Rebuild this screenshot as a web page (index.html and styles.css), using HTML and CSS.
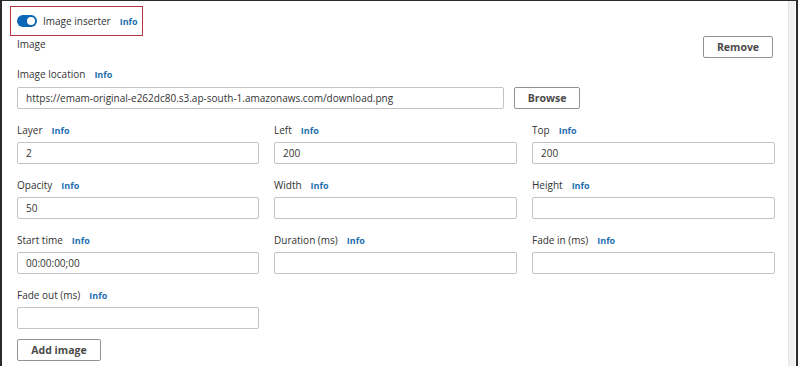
FILE: index.html
```html
<!DOCTYPE html>
<html>
<head>
<meta charset="utf-8">
<link rel="stylesheet" href="styles.css">
</head>
<body>
<div class="frame">
  <div class="panel">
    <div class="toggle-row">
      <span class="toggle"><span class="knob"></span></span>
      <span class="toggle-label">Image inserter</span>
      <span class="info">Info</span>
    </div>
    <div class="image-head">
      <span class="label">Image</span>
      <button class="btn">Remove</button>
    </div>
    <div class="field">
      <div class="label-row"><span class="label">Image location</span><span class="info">Info</span></div>
      <div class="loc-row">
        <div class="input loc">https://emam-original-e262dc80.s3.ap-south-1.amazonaws.com/download.png</div>
        <button class="btn">Browse</button>
      </div>
    </div>
    <div class="grid">
      <div class="field">
        <div class="label-row"><span class="label">Layer</span><span class="info">Info</span></div>
        <div class="input">2</div>
      </div>
      <div class="field">
        <div class="label-row"><span class="label">Left</span><span class="info">Info</span></div>
        <div class="input">200</div>
      </div>
      <div class="field">
        <div class="label-row"><span class="label">Top</span><span class="info">Info</span></div>
        <div class="input">200</div>
      </div>
      <div class="field">
        <div class="label-row"><span class="label">Opacity</span><span class="info">Info</span></div>
        <div class="input">50</div>
      </div>
      <div class="field">
        <div class="label-row"><span class="label">Width</span><span class="info">Info</span></div>
        <div class="input"></div>
      </div>
      <div class="field">
        <div class="label-row"><span class="label">Height</span><span class="info">Info</span></div>
        <div class="input"></div>
      </div>
      <div class="field">
        <div class="label-row"><span class="label">Start time</span><span class="info">Info</span></div>
        <div class="input">00:00:00;00</div>
      </div>
      <div class="field">
        <div class="label-row"><span class="label">Duration (ms)</span><span class="info">Info</span></div>
        <div class="input"></div>
      </div>
      <div class="field">
        <div class="label-row"><span class="label">Fade in (ms)</span><span class="info">Info</span></div>
        <div class="input"></div>
      </div>
      <div class="field">
        <div class="label-row"><span class="label">Fade out (ms)</span><span class="info">Info</span></div>
        <div class="input"></div>
      </div>
    </div>
    <div class="actions">
      <button class="btn">Add image</button>
    </div>
  </div>
  <div class="scrolltrack"></div>
</div>
</body>
</html>
```

FILE: styles.css
```css
html, body {
  margin: 0;
  padding: 0;
  background: #fff;
}
body {
  font-family: "Open Sans", "Liberation Sans", sans-serif;
  font-size: 10px;
  color: #333;
}
.frame {
  width: 798px;
  height: 366px;
  box-sizing: border-box;
  border-left: 2px solid #2b2b2b;
  border-top: 1px solid #2b2b2b;
  border-right: 2px solid #2b2b2b;
  display: flex;
  overflow: hidden;
}
.panel {
  flex: 1;
  padding: 5px 0 0 15px;
  box-sizing: border-box;
}
.scrolltrack {
  width: 6px;
  margin-right: 1px;
  background: #f1f1f1;
  border-left: 1px solid #e6e6e6;
}
.toggle-row {
  display: flex;
  align-items: center;
  height: 30px;
  border: 1px solid #b8343f;
  margin-left: -7px;
  padding: 0 0 0 6px;
  box-sizing: border-box;
  width: 133px;
  white-space: nowrap;
}
.toggle {
  width: 20px;
  height: 12px;
  border-radius: 6px;
  background: #0b66b7;
  position: relative;
  margin-right: 6px;
  flex: none;
}
.knob {
  position: absolute;
  right: 2px;
  top: 2px;
  width: 8px;
  height: 8px;
  border-radius: 50%;
  background: #fff;
}
.toggle-label {
  color: #333;
}
.info {
  color: #1e6fb0;
  font-weight: 700;
  font-size: 9px;
  margin-left: 9px;
}
.label {
  color: #333;
}
.image-head {
  display: flex;
  justify-content: space-between;
  align-items: flex-start;
  margin-right: 15px;
  height: 29px;
}
.image-head .label {
  margin-top: 1px;
}
.btn {
  font-family: "Open Sans", "Liberation Sans", sans-serif;
  font-size: 10.5px;
  font-weight: 700;
  color: #4a4a4a;
  background: #fff;
  border: 1px solid #939393;
  border-radius: 2px;
  height: 22px;
  padding: 0;
  line-height: 20px;
  margin: 0;
}
.image-head .btn {
  width: 70px;
}
.field {
  display: flex;
  flex-direction: column;
}
.label-row {
  display: flex;
  align-items: baseline;
  height: 18px;
  line-height: 18px;
  margin-bottom: 4px;
}
.input {
  height: 22px;
  box-sizing: border-box;
  border: 1px solid #c3c3c3;
  border-radius: 2px;
  padding: 0 8px;
  line-height: 20px;
  color: #333;
  white-space: nowrap;
  overflow: hidden;
}
.loc-row {
  display: flex;
  gap: 10px;
}
.input.loc {
  width: 487px;
}
.loc-row .btn {
  width: 66px;
}
.grid {
  margin-top: 12px;
  display: grid;
  grid-template-columns: 242px 243px 243px;
  column-gap: 15px;
  row-gap: 12px;
  width: 758px;
}
.grid .label-row {
  margin-bottom: 3px;
}
.actions {
  margin-top: 10px;
}
.actions .btn {
  width: 84px;
}
```
